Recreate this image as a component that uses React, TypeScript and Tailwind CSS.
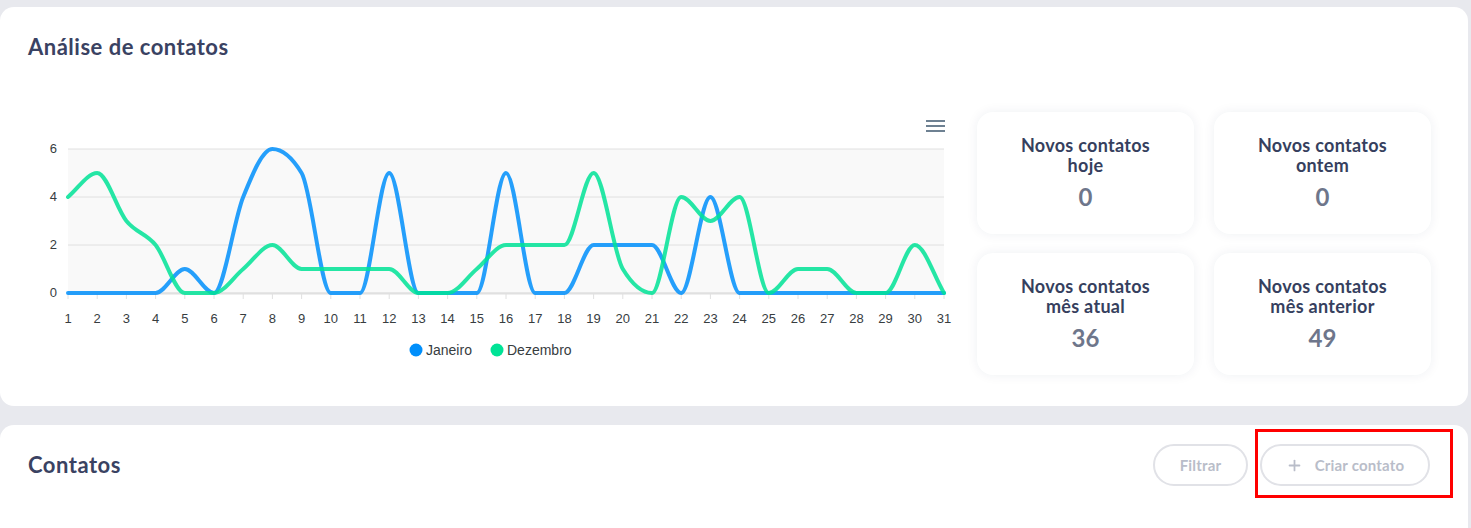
import { Plus } from "lucide-react";

const janeiro = [0, 0, 0, 0, 1, 0, 4, 6, 5, 0, 0, 5, 0, 0, 0, 5, 0, 0, 2, 2, 2, 0, 4, 0, 0, 0, 0, 0, 0, 0, 0];
const dezembro = [4, 5, 3, 2, 0, 0, 1, 2, 1, 1, 1, 1, 0, 0, 1, 2, 2, 2, 5, 1, 0, 4, 3, 4, 0, 1, 1, 0, 0, 2, 0];

const stats = [
  { title: "hoje", value: 0 },
  { title: "ontem", value: 0 },
  { title: "mês atual", value: 36 },
  { title: "mês anterior", value: 49 },
];

const X0 = 40;
const STEP = 29.2;
const Y0 = 193;
const UNIT = 24;

const px = (i: number) => X0 + i * STEP;
const py = (v: number) => Y0 - v * UNIT;

// monotone-x cubic, same feel as the chart lib's "smooth" curve
const smoothPath = (data: number[]) => {
  const n = data.length;
  const ys = data.map(py);
  const s: number[] = [];
  for (let i = 0; i < n - 1; i++) s.push((ys[i + 1] - ys[i]) / STEP);
  const t: number[] = [];
  for (let i = 0; i < n; i++) {
    if (i === 0) t.push(s[0]);
    else if (i === n - 1) t.push(s[n - 2]);
    else {
      const a = s[i - 1];
      const b = s[i];
      if (a * b <= 0) t.push(0);
      else {
        const p = (a + b) / 2;
        t.push((Math.sign(a) + Math.sign(b)) * Math.min(Math.abs(a), Math.abs(b), 0.5 * Math.abs(p)));
      }
    }
  }
  let d = `M${px(0)},${ys[0]}`;
  for (let i = 0; i < n - 1; i++) {
    const h = STEP / 3;
    d += ` C${px(i) + h},${ys[i] + t[i] * h} ${px(i + 1) - h},${ys[i + 1] - t[i + 1] * h} ${px(i + 1)},${ys[i + 1]}`;
  }
  return d;
};

const ContactsChart = () => (
  <svg width={930} height={270} className="shrink-0" style={{ fontFamily: '"Liberation Sans", Arial, sans-serif' }}>
    <rect x={X0} y={py(6)} width={px(30) - X0} height={UNIT * 6} fill="#f9f9f9" />
    {[0, 2, 4, 6].map((v) => (
      <g key={v}>
        <line x1={X0} x2={px(30)} y1={py(v)} y2={py(v)} stroke="#e0e0e0" strokeWidth={1} />
        <text x={29} y={py(v) + 4} textAnchor="end" fontSize={13} fill="#373d3f">
          {v}
        </text>
      </g>
    ))}
    <line x1={X0} x2={px(30)} y1={Y0 + 0.5} y2={Y0 + 0.5} stroke="#e0e0e0" strokeWidth={2} />
    {janeiro.map((_, i) => (
      <g key={i}>
        <line x1={px(i)} x2={px(i)} y1={Y0} y2={Y0 + 6} stroke="#e0e0e0" />
        <text x={px(i)} y={223} textAnchor="middle" fontSize={13} fill="#373d3f">
          {i + 1}
        </text>
      </g>
    ))}
    <path d={smoothPath(janeiro)} fill="none" stroke="#008ffb" strokeOpacity={0.85} strokeWidth={4} strokeLinecap="round" />
    <path d={smoothPath(dezembro)} fill="none" stroke="#00e396" strokeOpacity={0.85} strokeWidth={4} strokeLinecap="round" />
    <g stroke="#6e8192" strokeWidth={2}>
      <line x1={898} x2={917} y1={21} y2={21} />
      <line x1={898} x2={917} y1={26} y2={26} />
      <line x1={898} x2={917} y1={31} y2={31} />
    </g>
    <circle cx={388} cy={250} r={6.5} fill="#008ffb" />
    <text x={398} y={255} fontSize={14} fill="#373d3f">
      Janeiro
    </text>
    <circle cx={469} cy={250} r={6.5} fill="#00e396" />
    <text x={479} y={255} fontSize={14} fill="#373d3f">
      Dezembro
    </text>
  </svg>
);

const StatCard = ({ title, value }: { title: string; value: number }) => (
  <div className="flex h-[122px] flex-col items-center rounded-[16px] bg-white pt-[23px] shadow-[0_0_12px_rgba(30,40,80,0.07)]">
    <p className="text-center text-[18px] font-bold leading-[20px] tracking-[0.3px] text-[#363f5e]">
      Novos contatos
      <br />
      {title}
    </p>
    <p className="mt-[8px] text-[24px] font-bold leading-[28px] text-[#6e768b]">{value}</p>
  </div>
);

export default function App() {
  return (
    <div
      className="min-h-screen bg-[#e8e9ee] pt-[7px]"
      style={{ fontFamily: 'Lato, "Open Sans", sans-serif' }}
    >
      <section className="mr-[3px] rounded-[14px] bg-white pb-[31px] pt-[26px]">
        <h2 className="mb-[39px] px-7 text-[22px] font-bold leading-[28px] tracking-[0.5px] text-[#3a4262]">
          Análise de contatos
        </h2>
        <div className="flex items-start pl-7 pr-[37px]">
          <ContactsChart />
          <div className="ml-[19px] mt-[12px] grid w-[454px] grid-cols-2 gap-x-[20px] gap-y-[19px]">
            {stats.map((s) => (
              <StatCard key={s.title} title={s.title} value={s.value} />
            ))}
          </div>
        </div>
      </section>

      <section className="mr-[3px] mt-[19px] flex h-[120px] items-start justify-between rounded-t-[14px] bg-white pl-7 pr-[38px] pt-[19px]">
        <h2 className="text-[22px] font-bold leading-[42px] tracking-[0.5px] text-[#3a4262]">Contatos</h2>
        <div className="flex items-center gap-3">
          <button className="h-[42px] w-[95px] rounded-full border-2 border-[#e1e2e7] text-[15px] font-bold tracking-[0.2px] text-[#b9bdc9]">
            Filtrar
          </button>
          <div className="relative">
            <button className="flex h-[42px] w-[170px] items-center justify-center gap-[12px] rounded-full border-2 border-[#e1e2e7] text-[15px] font-bold tracking-[0.2px] text-[#b9bdc9]">
              <Plus size={17} strokeWidth={2.5} />
              Criar contato
            </button>
            <div className="pointer-events-none absolute -bottom-[12px] -left-[5px] -right-[23px] -top-[15px] border-[3px] border-[#ff0000]" />
          </div>
        </div>
      </section>
    </div>
  );
}
